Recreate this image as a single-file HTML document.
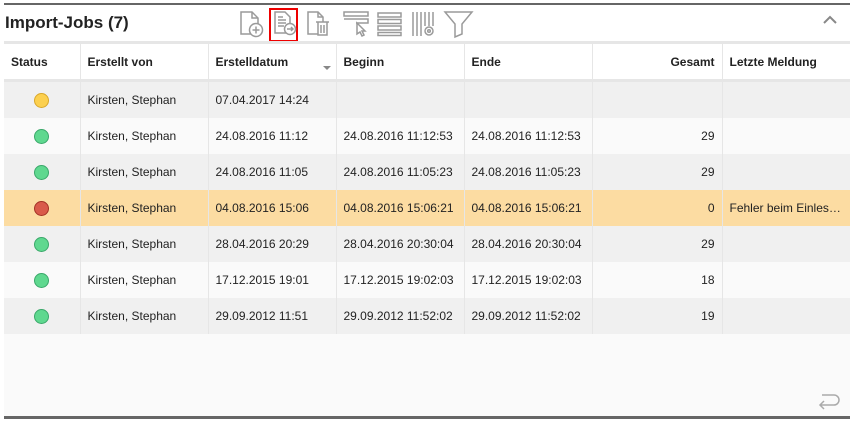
<!DOCTYPE html>
<html><head><style>
body{margin:0;width:854px;height:422px;background:#fff;font-family:"Liberation Sans",Arial,sans-serif;overflow:hidden;position:relative}
.top{position:absolute;left:4px;right:4px;top:3px;height:2px;background:#666}
.bot{position:absolute;left:4px;right:4px;top:416px;height:3px;background:#666}
.title{position:absolute;left:5px;top:13px;font-size:17px;font-weight:bold;color:#222}
.grid{position:absolute;left:4px;top:41px;width:846px;height:375px;background:#fafafa}
table{border-collapse:collapse;table-layout:fixed;width:846px;font-size:12px;color:#222}
th{height:35px;text-align:left;font-weight:bold;padding:0 7px;background:#fff;border-left:1px solid #e6e6e6;border-top:3px solid #e6e6e6;border-bottom:3px solid #e6e6e6;position:relative}
td{height:36px;padding:0 7px;border-left:1px solid #e6e6e6;white-space:nowrap;overflow:hidden}
th:first-child,td:first-child{border-left:none}
tr.o td{background:#f0f0f0}tr.e td{background:#fafafa}tr.s td{background:#fcdca2}
.r{text-align:right}
.dot{display:block;margin:0 auto;width:13px;height:13px;border-radius:50%;border:1px solid}
.g{background:#5fd88f;border-color:#3aa86a}.y{background:#fcd04f;border-color:#d9a82a}.rd{background:#d95a4a;border-color:#a33226}
.arr{position:absolute;right:5px;bottom:9px;width:0;height:0;border-left:4px solid transparent;border-right:4px solid transparent;border-top:4px solid #888}
</style></head><body>
<div class="top"></div>
<div class="title">Import-Jobs (7)</div>
<svg style="position:absolute;left:0;top:0" width="480" height="44" fill="none" stroke="#9a9a9a" stroke-width="1.5">
<path d="M241 12h11l6 6v16H241z"/><path d="M252 12v6h6"/><circle cx="256" cy="30" r="6.5" fill="#fff"/><path d="M256 26.5v7M252.5 30h7"/>
<rect x="270" y="9" width="27" height="32" stroke="#e00" stroke-width="2"/>
<path d="M275 12h10l5 5v16H275z"/><path d="M278 17h5M278 20h8M278 23h8M278 26h6"/><circle cx="290" cy="29" r="5.5" fill="#fff"/><path d="M287 29h6M291 27l2 2-2 2"/>
<path d="M308 12h10l5 5v17H308z"/><path d="M318 12v5h5"/><path d="M316 22h13M318 22v13h9V22M321 25v8M324 25v8" fill="#fff"/>
<path d="M344 12h24v4h-24zM344 19h24v4h-12"/><path d="M357 23l8 8-3 0 2 4-2 1-2-4-3 2z" fill="#fff"/>
<path d="M378 13h23v4h-23zM378 19.5h23v4h-23zM378 26h23v4h-23zM378 32.5h23v3h-23z"/>
<path d="M413 12v24M417 12v24M421 12v24M425 12v14M429 12v14M433 12v14"/><circle cx="429" cy="31" r="4" fill="#fff"/><circle cx="429" cy="31" r="1.3"/>
<path d="M445 12h27l-10 12v10l-7 3V24z"/>
</svg>
<svg style="position:absolute;left:822px;top:14px" width="16" height="12"><path d="M2 9l6-6 6 6" fill="none" stroke="#888" stroke-width="2"/></svg>
<div class="grid">
<table>
<colgroup><col style="width:76px"><col style="width:128px"><col style="width:128px"><col style="width:128px"><col style="width:128px"><col style="width:130px"><col></colgroup>
<tr><th>Status</th><th>Erstellt von</th><th>Erstelldatum<span class="arr"></span></th><th>Beginn</th><th>Ende</th><th class="r">Gesamt</th><th>Letzte Meldung</th></tr>
<tr class="o"><td><span class="dot y"></span></td><td>Kirsten, Stephan</td><td>07.04.2017 14:24</td><td></td><td></td><td></td><td></td></tr>
<tr class="e"><td><span class="dot g"></span></td><td>Kirsten, Stephan</td><td>24.08.2016 11:12</td><td>24.08.2016 11:12:53</td><td>24.08.2016 11:12:53</td><td class="r">29</td><td></td></tr>
<tr class="o"><td><span class="dot g"></span></td><td>Kirsten, Stephan</td><td>24.08.2016 11:05</td><td>24.08.2016 11:05:23</td><td>24.08.2016 11:05:23</td><td class="r">29</td><td></td></tr>
<tr class="s"><td><span class="dot rd"></span></td><td>Kirsten, Stephan</td><td>04.08.2016 15:06</td><td>04.08.2016 15:06:21</td><td>04.08.2016 15:06:21</td><td class="r">0</td><td>Fehler beim Einles…</td></tr>
<tr class="o"><td><span class="dot g"></span></td><td>Kirsten, Stephan</td><td>28.04.2016 20:29</td><td>28.04.2016 20:30:04</td><td>28.04.2016 20:30:04</td><td class="r">29</td><td></td></tr>
<tr class="e"><td><span class="dot g"></span></td><td>Kirsten, Stephan</td><td>17.12.2015 19:01</td><td>17.12.2015 19:02:03</td><td>17.12.2015 19:02:03</td><td class="r">18</td><td></td></tr>
<tr class="o"><td><span class="dot g"></span></td><td>Kirsten, Stephan</td><td>29.09.2012 11:51</td><td>29.09.2012 11:52:02</td><td>29.09.2012 11:52:02</td><td class="r">19</td><td></td></tr>
</table>
</div>
<svg style="position:absolute;left:816px;top:390px" width="26" height="20"><path d="M4 15h14a5 5 0 0 0 0-10H6M8 11l-4 4 4 4" fill="none" stroke="#aaa" stroke-width="1.5"/></svg>
<div class="bot"></div>
</body></html>
